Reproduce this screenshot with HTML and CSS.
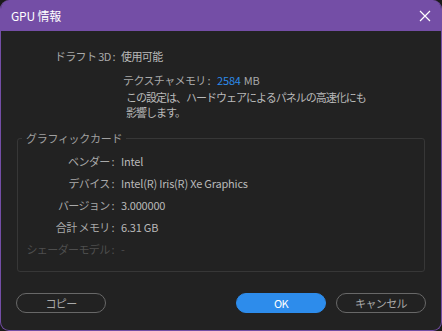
FILE: index.html
```html
<!DOCTYPE html>
<html lang="ja">
<head>
  <meta charset="UTF-8">
  <title>GPU 情報</title>
  <link rel="stylesheet" href="styles.css">
</head>
<body>
  <div class="window">
    <div class="titlebar">
      <span class="title">GPU 情報</span>
      <svg class="close" width="12" height="12" viewBox="0 0 12 12">
        <path d="M1 1 L11 11 M11 1 L1 11" stroke="#ffffff" stroke-width="1.2" fill="none"/>
      </svg>
    </div>
    <div class="content">
      <div class="row draft">
        <span class="label">ドラフト 3D :</span>
        <span class="value">使用可能</span>
      </div>
      <div class="texture">
        <span class="tex-label">テクスチャメモリ :</span>
        <span class="num">2584</span>
        <span class="unit">MB</span>
      </div>
      <p class="note">この設定は、ハードウェアによるパネルの高速化にも<br>影響します。</p>

      <fieldset class="group">
        <legend>グラフィックカード</legend>
        <div class="row">
          <span class="label">ベンダー :</span>
          <span class="value">Intel</span>
        </div>
        <div class="row">
          <span class="label">デバイス :</span>
          <span class="value">Intel(R) Iris(R) Xe Graphics</span>
        </div>
        <div class="row">
          <span class="label">バージョン :</span>
          <span class="value">3.000000</span>
        </div>
        <div class="row">
          <span class="label">合計 メモリ :</span>
          <span class="value">6.31 GB</span>
        </div>
        <div class="row disabled">
          <span class="label">シェーダーモデル :</span>
          <span class="value">-</span>
        </div>
      </fieldset>

      <div class="buttons">
        <button class="btn">コピー</button>
        <span class="spacer"></span>
        <button class="btn primary">OK</button>
        <button class="btn">キャンセル</button>
      </div>
    </div>
  </div>
</body>
</html>
```

FILE: styles.css
```css
body {
  margin: 0;
  background: #1a1a1a;
  font-family: "Noto Sans CJK JP", "Noto Sans", sans-serif;
  font-size: 11px;
  letter-spacing: -0.6px;
  color: #b9b9b9;
}

.window {
  width: 442px;
  height: 331px;
  box-sizing: border-box;
  border: 1px solid #744ea6;
  border-top: none;
  border-radius: 9px;
  background: #222222;
  overflow: hidden;
  display: flex;
  flex-direction: column;
}

.titlebar {
  height: 31px;
  background: #744ea6;
  display: flex;
  align-items: center;
  justify-content: space-between;
  padding: 0 10px 0 10px;
  flex-shrink: 0;
}

.title {
  color: #ffffff;
  font-size: 12px;
  letter-spacing: -0.2px;
  margin-top: -1px;
}

.content {
  flex: 1;
  display: flex;
  flex-direction: column;
  padding: 0 15px;
}

.row {
  display: flex;
  align-items: center;
  height: 22px;
}

.label {
  width: 97px;
  text-align: right;
  color: #a9a9a9;
  white-space: nowrap;
}

.value {
  margin-left: 7px;
  color: #b9b9b9;
  letter-spacing: -0.2px;
}

.draft {
  margin-top: 14px;
}

.draft .label {
  width: 99px;
}

.draft .value {
  margin-left: 6px;
  letter-spacing: -0.6px;
}

.texture {
  margin-top: 2px;
  padding-left: 107px;
  height: 22px;
  display: flex;
  align-items: center;
}

.tex-label {
  color: #a9a9a9;
}

.num {
  color: #2d8ceb;
  margin-left: 7px;
  letter-spacing: -0.2px;
}

.unit {
  margin-left: 3px;
  color: #a9a9a9;
  letter-spacing: -0.2px;
}

.note {
  margin: -1px 0 0 0;
  padding-left: 110px;
  line-height: 15px;
  letter-spacing: -1px;
  color: #b9b9b9;
}

.group {
  margin: 10px 1px 0 1px;
  padding: 4px 0 11px 0;
  border: 1px solid #373737;
  border-radius: 3px;
}

.group legend {
  margin-left: 4px;
  padding: 0 4px;
  color: #a0a0a0;
  letter-spacing: -0.3px;
}

.group .label {
  width: 96px;
}

.disabled .label,
.disabled .value {
  color: #4e4e4e;
}

.buttons {
  display: flex;
  align-items: center;
  margin-top: 21px;
  gap: 10px;
}

.spacer {
  flex: 1;
}

.btn {
  width: 90px;
  height: 20px;
  border: 1px solid #686868;
  border-radius: 10px;
  background: transparent;
  color: #a9a9a9;
  font-family: inherit;
  font-size: 11px;
  letter-spacing: -0.6px;
  padding: 0;
}

.btn.primary {
  background: #2d8ceb;
  border-color: #2d8ceb;
  color: #ffffff;
}
```
